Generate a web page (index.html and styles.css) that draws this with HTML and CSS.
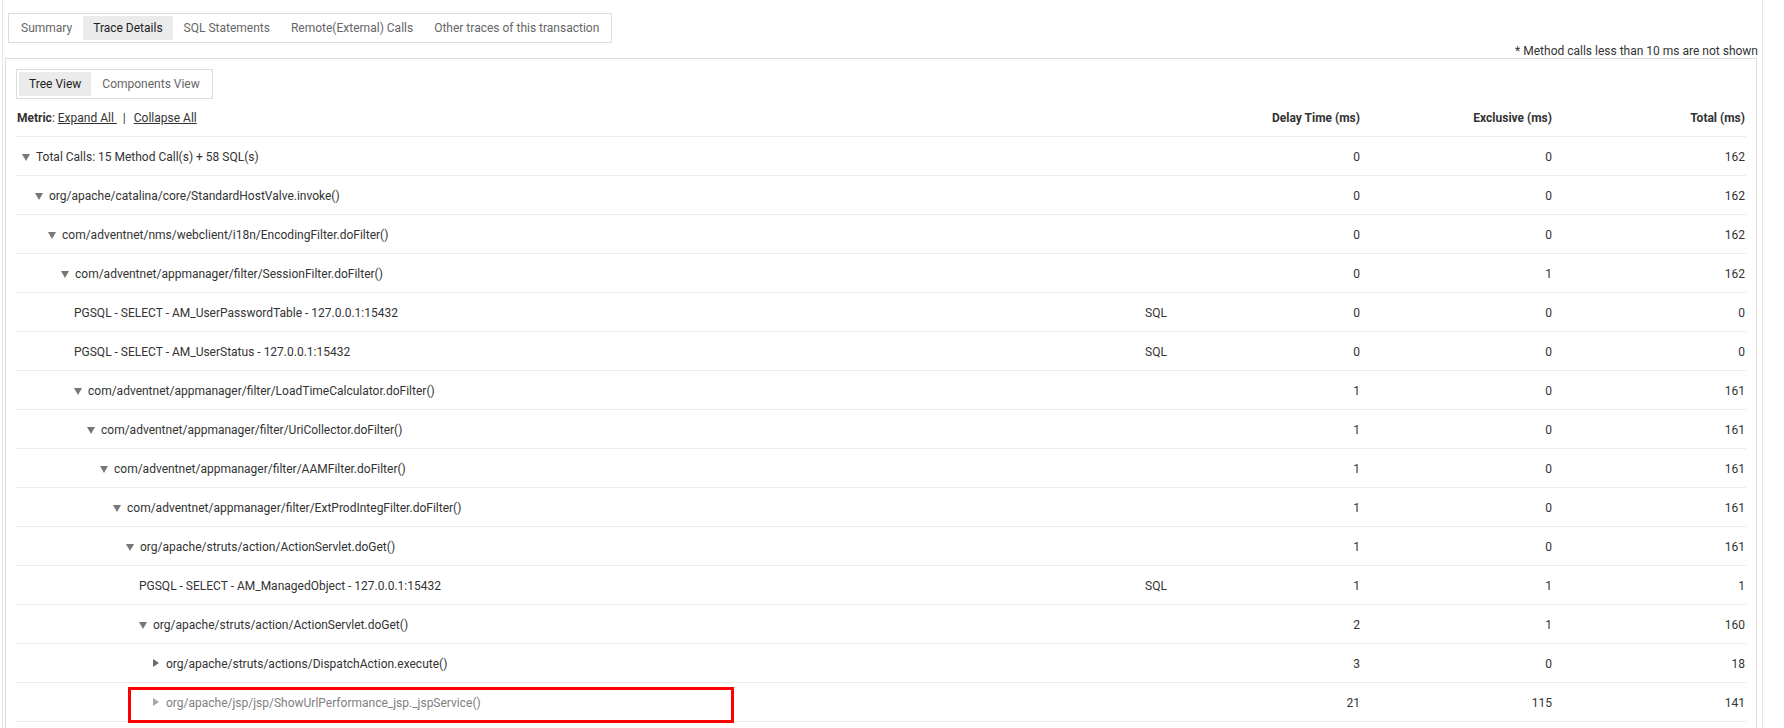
FILE: index.html
```html
<!DOCTYPE html>
<html>
<head>
<meta charset="utf-8">
<title>Trace Details</title>
<link rel="stylesheet" href="styles.css">
</head>
<body>
<div class="page">
  <div class="tabs main-tabs">
    <span class="tab">Summary</span>
    <span class="tab active">Trace Details</span>
    <span class="tab">SQL Statements</span>
    <span class="tab">Remote(External) Calls</span>
    <span class="tab">Other traces of this transaction</span>
  </div>
  <div class="notice">* Method calls less than 10 ms are not shown</div>
  <div class="panel">
    <div class="tabs sub-tabs">
      <span class="tab active">Tree View</span>
      <span class="tab">Components View</span>
    </div>
    <div class="table">
      <div class="row head">
        <div class="metric"><b>Metric</b>: <a class="lnk">Expand All&nbsp;</a><span class="sep">|</span><a class="lnk">Collapse All</a></div>
        <div class="c-type"></div>
        <div class="c-num">Delay Time (ms)</div>
        <div class="c-num">Exclusive (ms)</div>
        <div class="c-num">Total (ms)</div>
      </div>

      <div class="row">
        <div class="c-name l0"><span class="tg down"></span>Total Calls: 15 Method Call(s) + 58 SQL(s)</div>
        <div class="c-type"></div><div class="c-num">0</div><div class="c-num">0</div><div class="c-num">162</div>
      </div>
      <div class="row">
        <div class="c-name l1"><span class="tg down"></span>org/apache/catalina/core/StandardHostValve.invoke()</div>
        <div class="c-type"></div><div class="c-num">0</div><div class="c-num">0</div><div class="c-num">162</div>
      </div>
      <div class="row">
        <div class="c-name l2"><span class="tg down"></span>com/adventnet/nms/webclient/i18n/EncodingFilter.doFilter()</div>
        <div class="c-type"></div><div class="c-num">0</div><div class="c-num">0</div><div class="c-num">162</div>
      </div>
      <div class="row">
        <div class="c-name l3"><span class="tg down"></span>com/adventnet/appmanager/filter/SessionFilter.doFilter()</div>
        <div class="c-type"></div><div class="c-num">0</div><div class="c-num">1</div><div class="c-num">162</div>
      </div>
      <div class="row">
        <div class="c-name l4">PGSQL - SELECT - AM_UserPasswordTable - 127.0.0.1:15432</div>
        <div class="c-type">SQL</div><div class="c-num">0</div><div class="c-num">0</div><div class="c-num">0</div>
      </div>
      <div class="row">
        <div class="c-name l4">PGSQL - SELECT - AM_UserStatus - 127.0.0.1:15432</div>
        <div class="c-type">SQL</div><div class="c-num">0</div><div class="c-num">0</div><div class="c-num">0</div>
      </div>
      <div class="row">
        <div class="c-name l4"><span class="tg down"></span>com/adventnet/appmanager/filter/LoadTimeCalculator.doFilter()</div>
        <div class="c-type"></div><div class="c-num">1</div><div class="c-num">0</div><div class="c-num">161</div>
      </div>
      <div class="row">
        <div class="c-name l5"><span class="tg down"></span>com/adventnet/appmanager/filter/UriCollector.doFilter()</div>
        <div class="c-type"></div><div class="c-num">1</div><div class="c-num">0</div><div class="c-num">161</div>
      </div>
      <div class="row">
        <div class="c-name l6"><span class="tg down"></span>com/adventnet/appmanager/filter/AAMFilter.doFilter()</div>
        <div class="c-type"></div><div class="c-num">1</div><div class="c-num">0</div><div class="c-num">161</div>
      </div>
      <div class="row">
        <div class="c-name l7"><span class="tg down"></span>com/adventnet/appmanager/filter/ExtProdIntegFilter.doFilter()</div>
        <div class="c-type"></div><div class="c-num">1</div><div class="c-num">0</div><div class="c-num">161</div>
      </div>
      <div class="row">
        <div class="c-name l8"><span class="tg down"></span>org/apache/struts/action/ActionServlet.doGet()</div>
        <div class="c-type"></div><div class="c-num">1</div><div class="c-num">0</div><div class="c-num">161</div>
      </div>
      <div class="row">
        <div class="c-name l9">PGSQL - SELECT - AM_ManagedObject - 127.0.0.1:15432</div>
        <div class="c-type">SQL</div><div class="c-num">1</div><div class="c-num">1</div><div class="c-num">1</div>
      </div>
      <div class="row">
        <div class="c-name l9"><span class="tg down"></span>org/apache/struts/action/ActionServlet.doGet()</div>
        <div class="c-type"></div><div class="c-num">2</div><div class="c-num">1</div><div class="c-num">160</div>
      </div>
      <div class="row">
        <div class="c-name l10"><span class="tg right"></span>org/apache/struts/actions/DispatchAction.execute()</div>
        <div class="c-type"></div><div class="c-num">3</div><div class="c-num">0</div><div class="c-num">18</div>
      </div>
      <div class="row marked">
        <div class="c-name l10 muted"><span class="tg right light"></span>org/apache/jsp/jsp/ShowUrlPerformance_jsp._jspService()</div>
        <div class="c-type"></div><div class="c-num">21</div><div class="c-num">115</div><div class="c-num">141</div>
        <div class="highlight"></div>
      </div>
      <div class="row">
        <div class="c-name l10"></div>
        <div class="c-type"></div><div class="c-num"></div><div class="c-num"></div><div class="c-num"></div>
      </div>
    </div>
  </div>
</div>
</body>
</html>
```

FILE: styles.css
```css
* { box-sizing: border-box; }
html, body { margin: 0; padding: 0; background: #fff; }
body {
  font-family: Roboto, "Liberation Sans", Arial, sans-serif;
  font-size: 12px;
  color: #333;
}
.page {
  margin-left: 2px;
  width: 1761px;
  min-height: 728px;
  border-left: 1px solid #e6e6e6;
  border-right: 1px solid #e6e6e6;
  padding-top: 13px;
}
.tabs {
  display: inline-flex;
  gap: 1px;
  padding: 2px;
  border: 1px solid #dcdcdc;
  background: #fff;
}
.tab {
  padding: 0 10px;
  line-height: 24px;
  height: 24px;
  color: #666;
  white-space: nowrap;
}
.tab.active {
  background: #ebebeb;
  color: #222;
}
.main-tabs { margin-left: 5px; }
.notice {
  margin-top: 1px;
  margin-right: 4px;
  text-align: right;
  line-height: 14px;
  height: 14px;
  color: #333;
}
.panel {
  margin-left: 2px;
  margin-right: 5px;
  border: 1px solid #dcdcdc;
  border-bottom: none;
  padding: 10px 9px 0 10px;
}
.table { width: 1730px; }
.row {
  display: grid;
  grid-template-columns: 1129px 100px 115px 192px 193px;
  height: 39px;
  align-items: center;
  border-bottom: 1px solid #ececec;
  position: relative;
  padding-top: 1px;
}
.row.head {
  height: 38px;
  padding-top: 0;
  font-weight: bold;
  color: #333;
}
.metric {
  padding-left: 1px;
  font-weight: normal;
  white-space: nowrap;
  color: #333;
}
.metric b { font-weight: bold; color: #333; }
.sep { margin: 0 8px 0 6px; }
.lnk { color: #333; text-decoration: underline; }
.c-name {
  display: flex;
  align-items: center;
  white-space: nowrap;
  color: #333;
}
.c-type { color: #333; }
.c-num { text-align: right; color: #333; }
.l0 { padding-left: 6px; }
.l1 { padding-left: 19px; }
.l2 { padding-left: 32px; }
.l3 { padding-left: 45px; }
.l4 { padding-left: 58px; }
.l5 { padding-left: 71px; }
.l6 { padding-left: 84px; }
.l7 { padding-left: 97px; }
.l8 { padding-left: 110px; }
.l9 { padding-left: 123px; }
.l10 { padding-left: 136px; }
.tg {
  flex: 0 0 14px;
  width: 14px;
  height: 10px;
  position: relative;
}
.tg::before {
  content: "";
  position: absolute;
  width: 0;
  height: 0;
}
.tg.down::before {
  left: 0;
  top: 2px;
  border-left: 4.5px solid transparent;
  border-right: 4.5px solid transparent;
  border-top: 7px solid #777;
}
.tg.right::before {
  left: 1px;
  top: 0.5px;
  border-top: 4.5px solid transparent;
  border-bottom: 4.5px solid transparent;
  border-left: 6px solid #6a6a6a;
}
.tg.right.light::before { border-left-color: #a8a8a8; }
.muted { color: #808080; }
.highlight {
  position: absolute;
  left: 112px;
  top: 4px;
  width: 606px;
  height: 36px;
  border: 3px solid #f00;
  pointer-events: none;
}
```
